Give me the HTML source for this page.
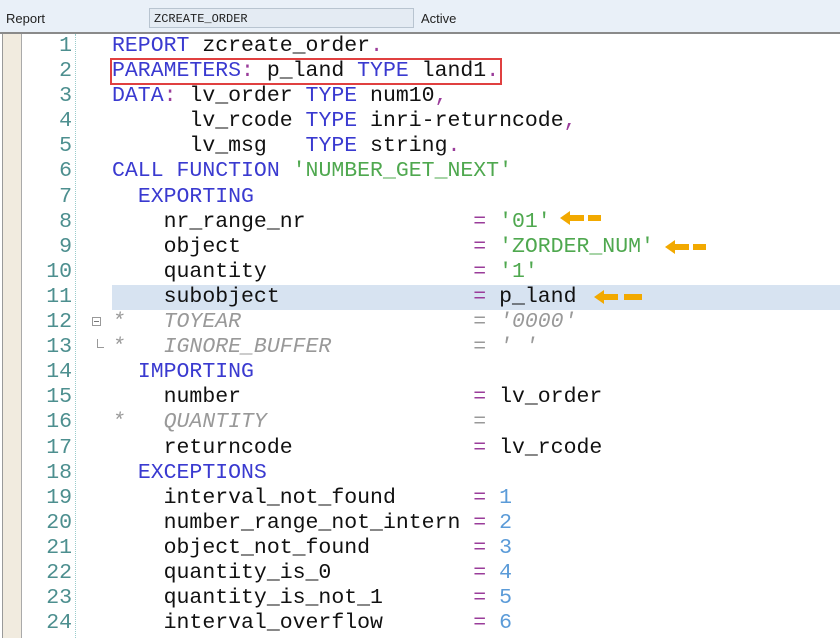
<!DOCTYPE html>
<html><head><style>
body{margin:0;width:840px;height:638px;overflow:hidden;background:#fff;font-family:"Liberation Sans",sans-serif;position:relative}
#hdr{position:absolute;left:0;top:0;width:840px;height:32px;background:#e9f0f8;border-bottom:2px solid #8a8a8a}
#hdr .l{position:absolute;left:6px;top:11px;font-size:13px;color:#222}
#hdr .f{position:absolute;left:149px;top:8px;width:265px;height:20px;border:1px solid #b8c4d0;background:#e4ebf3;font-family:"Liberation Mono",monospace;font-size:12px;line-height:20px;padding-left:4px;box-sizing:border-box;color:#222}
#hdr .a{position:absolute;left:421px;top:11px;font-size:13px;color:#222}
#lb{position:absolute;left:2px;top:34px;width:18px;height:604px;background:#f1ebdf;border-left:1px solid #999;border-right:1px solid #aaa}
#dot{position:absolute;left:75px;top:34px;height:604px;border-left:1px dotted #9cc}
#hl{position:absolute;left:112px;top:285px;width:728px;height:25px;background:#d7e3f1}
#code{position:absolute;left:0;top:34px;font-family:"Liberation Mono",monospace;font-size:21.5px;line-height:25.1px;color:#111}
.r{height:25.1px;position:relative}
.n{position:absolute;left:0;width:72px;text-align:right;color:#4d8f8f}
.c{position:absolute;left:112px;white-space:pre}
.k{color:#3a3ad0}.s{color:#4fa84f}.p{color:#9a3c9a}.m{color:#999;font-style:italic}.d{color:#5b9bd8}
#box{position:absolute;left:110px;top:58px;width:392px;height:27px;border:2px solid #e04040;box-sizing:border-box}
</style></head><body>
<div id="hdr"><span class="l">Report</span><div class="f">ZCREATE_ORDER</div><span class="a">Active</span></div>
<div id="lb"></div>
<div id="hl"></div>
<div id="dot"></div>
<div id="code"><div class="r"><span class="n">1</span><span class="c"><span class="k">REPORT</span> zcreate_order<span class="p">.</span></span></div><div class="r"><span class="n">2</span><span class="c"><span class="k">PARAMETERS</span><span class="p">:</span> p_land <span class="k">TYPE</span> land1<span class="p">.</span></span></div><div class="r"><span class="n">3</span><span class="c"><span class="k">DATA</span><span class="p">:</span> lv_order <span class="k">TYPE</span> num10<span class="p">,</span></span></div><div class="r"><span class="n">4</span><span class="c">      lv_rcode <span class="k">TYPE</span> inri-returncode<span class="p">,</span></span></div><div class="r"><span class="n">5</span><span class="c">      lv_msg   <span class="k">TYPE</span> string<span class="p">.</span></span></div><div class="r"><span class="n">6</span><span class="c"><span class="k">CALL FUNCTION</span> <span class="s">'NUMBER_GET_NEXT'</span></span></div><div class="r"><span class="n">7</span><span class="c">  <span class="k">EXPORTING</span></span></div><div class="r"><span class="n">8</span><span class="c">    nr_range_nr             <span class="p">=</span> <span class="s">'01'</span></span></div><div class="r"><span class="n">9</span><span class="c">    object                  <span class="p">=</span> <span class="s">'ZORDER_NUM'</span></span></div><div class="r"><span class="n">10</span><span class="c">    quantity                <span class="p">=</span> <span class="s">'1'</span></span></div><div class="r"><span class="n">11</span><span class="c">    subobject               <span class="p">=</span> p_land</span></div><div class="r"><span class="n">12</span><span class="c m">*   TOYEAR                  = '0000'</span></div><div class="r"><span class="n">13</span><span class="c m">*   IGNORE_BUFFER           = ' '</span></div><div class="r"><span class="n">14</span><span class="c">  <span class="k">IMPORTING</span></span></div><div class="r"><span class="n">15</span><span class="c">    number                  <span class="p">=</span> lv_order</span></div><div class="r"><span class="n">16</span><span class="c m">*   QUANTITY                =</span></div><div class="r"><span class="n">17</span><span class="c">    returncode              <span class="p">=</span> lv_rcode</span></div><div class="r"><span class="n">18</span><span class="c">  <span class="k">EXCEPTIONS</span></span></div><div class="r"><span class="n">19</span><span class="c">    interval_not_found      <span class="p">=</span> <span class="d">1</span></span></div><div class="r"><span class="n">20</span><span class="c">    number_range_not_intern <span class="p">=</span> <span class="d">2</span></span></div><div class="r"><span class="n">21</span><span class="c">    object_not_found        <span class="p">=</span> <span class="d">3</span></span></div><div class="r"><span class="n">22</span><span class="c">    quantity_is_0           <span class="p">=</span> <span class="d">4</span></span></div><div class="r"><span class="n">23</span><span class="c">    quantity_is_not_1       <span class="p">=</span> <span class="d">5</span></span></div><div class="r"><span class="n">24</span><span class="c">    interval_overflow       <span class="p">=</span> <span class="d">6</span></span></div></div>
<div style="position:absolute;left:92px;top:317px;width:9px;height:9px;border:1px solid #999;box-sizing:border-box"><div style="position:absolute;left:1px;top:3px;width:5px;height:1px;background:#777"></div></div>
<div style="position:absolute;left:97px;top:339px;width:6px;height:8px;border-left:1px solid #999;border-bottom:1px solid #999"></div>
<div id="box"></div>
<svg style="position:absolute;left:560px;top:210px" width="50" height="16"><polygon points="0,8 10,1 10,15" fill="#f2a900"/><rect x="9" y="5" width="15" height="6" fill="#f2a900"/><rect x="28" y="5" width="13" height="6" fill="#f2a900"/></svg>
<svg style="position:absolute;left:665px;top:239px" width="50" height="16"><polygon points="0,8 10,1 10,15" fill="#f2a900"/><rect x="9" y="5" width="15" height="6" fill="#f2a900"/><rect x="28" y="5" width="13" height="6" fill="#f2a900"/></svg>
<svg style="position:absolute;left:594px;top:289px" width="56" height="16"><polygon points="0,8 10,1 10,15" fill="#f2a900"/><rect x="9" y="5" width="15" height="6" fill="#f2a900"/><rect x="30" y="5" width="18" height="6" fill="#f2a900"/></svg>
</body></html>
